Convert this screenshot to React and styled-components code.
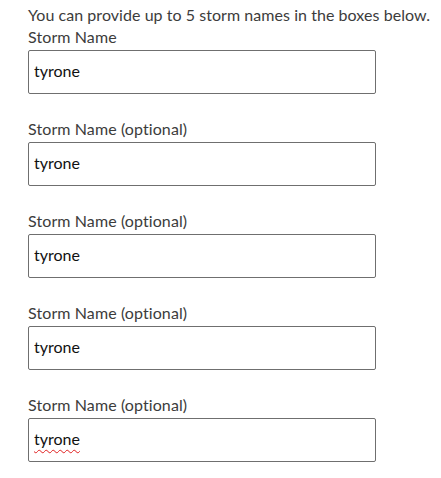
import React from "react";
import styled, { createGlobalStyle } from "styled-components";

const GlobalStyle = createGlobalStyle`
  html, body {
    margin: 0;
    padding: 0;
    background: #ffffff;
  }
  body {
    font-family: Lato, "Open Sans", sans-serif;
  }
`;

const fields = [
  { label: "Storm Name", value: "tyrone" },
  { label: "Storm Name (optional)", value: "tyrone" },
  { label: "Storm Name (optional)", value: "tyrone" },
  { label: "Storm Name (optional)", value: "tyrone" },
  { label: "Storm Name (optional)", value: "tyrone", misspelt: true },
];

const App = () => {
  return (
    <>
      <GlobalStyle />
      <StForm>
        <StIntro>You can provide up to 5 storm names in the boxes below.</StIntro>
        {fields.map((el, idx) => (
          <StField key={idx}>
            <StLabel htmlFor={`storm-${idx}`}>{el.label}</StLabel>
            <StInputWrap>
              <StInput
                id={`storm-${idx}`}
                type="text"
                defaultValue={el.value}
                spellCheck={false}
              />
              {el.misspelt && <StSquiggle aria-hidden>{el.value}</StSquiggle>}
            </StInputWrap>
          </StField>
        ))}
      </StForm>
    </>
  );
};
export default App;

const StForm = styled.div`
  display: flex;
  flex-direction: column;
  padding: 4px 0 0 28px;
  width: 413px;
  color: #3c3c3c;
`;

const StIntro = styled.p`
  margin: 0;
  font-size: 16px;
  letter-spacing: 0.05px;
  line-height: 22px;
  white-space: nowrap;
`;

const StField = styled.div`
  display: flex;
  flex-direction: column;
  margin-bottom: 24px;
`;

const StLabel = styled.label`
  font-size: 16px;
  letter-spacing: 0.1px;
  line-height: 22px;
  margin-bottom: 2px;
`;

const StInputWrap = styled.div`
  position: relative;
  width: 348px;
  height: 44px;
`;

const StInput = styled.input`
  box-sizing: border-box;
  width: 100%;
  height: 100%;
  padding: 0 5px 3px;
  border: 1px solid #6f6f6f;
  border-radius: 2px;
  outline: none;
  background: #ffffff;
  font-family: Lato, "Open Sans", sans-serif;
  font-size: 16px;
  color: #111111;
`;

const StSquiggle = styled.span`
  position: absolute;
  left: 6px;
  top: 0;
  height: 100%;
  padding-bottom: 3px;
  box-sizing: border-box;
  display: flex;
  align-items: center;
  font-family: Lato, "Open Sans", sans-serif;
  font-size: 16px;
  color: transparent;
  pointer-events: none;
  text-decoration: underline wavy #e02020;
  text-decoration-thickness: 1px;
  text-underline-offset: 4px;
`;
